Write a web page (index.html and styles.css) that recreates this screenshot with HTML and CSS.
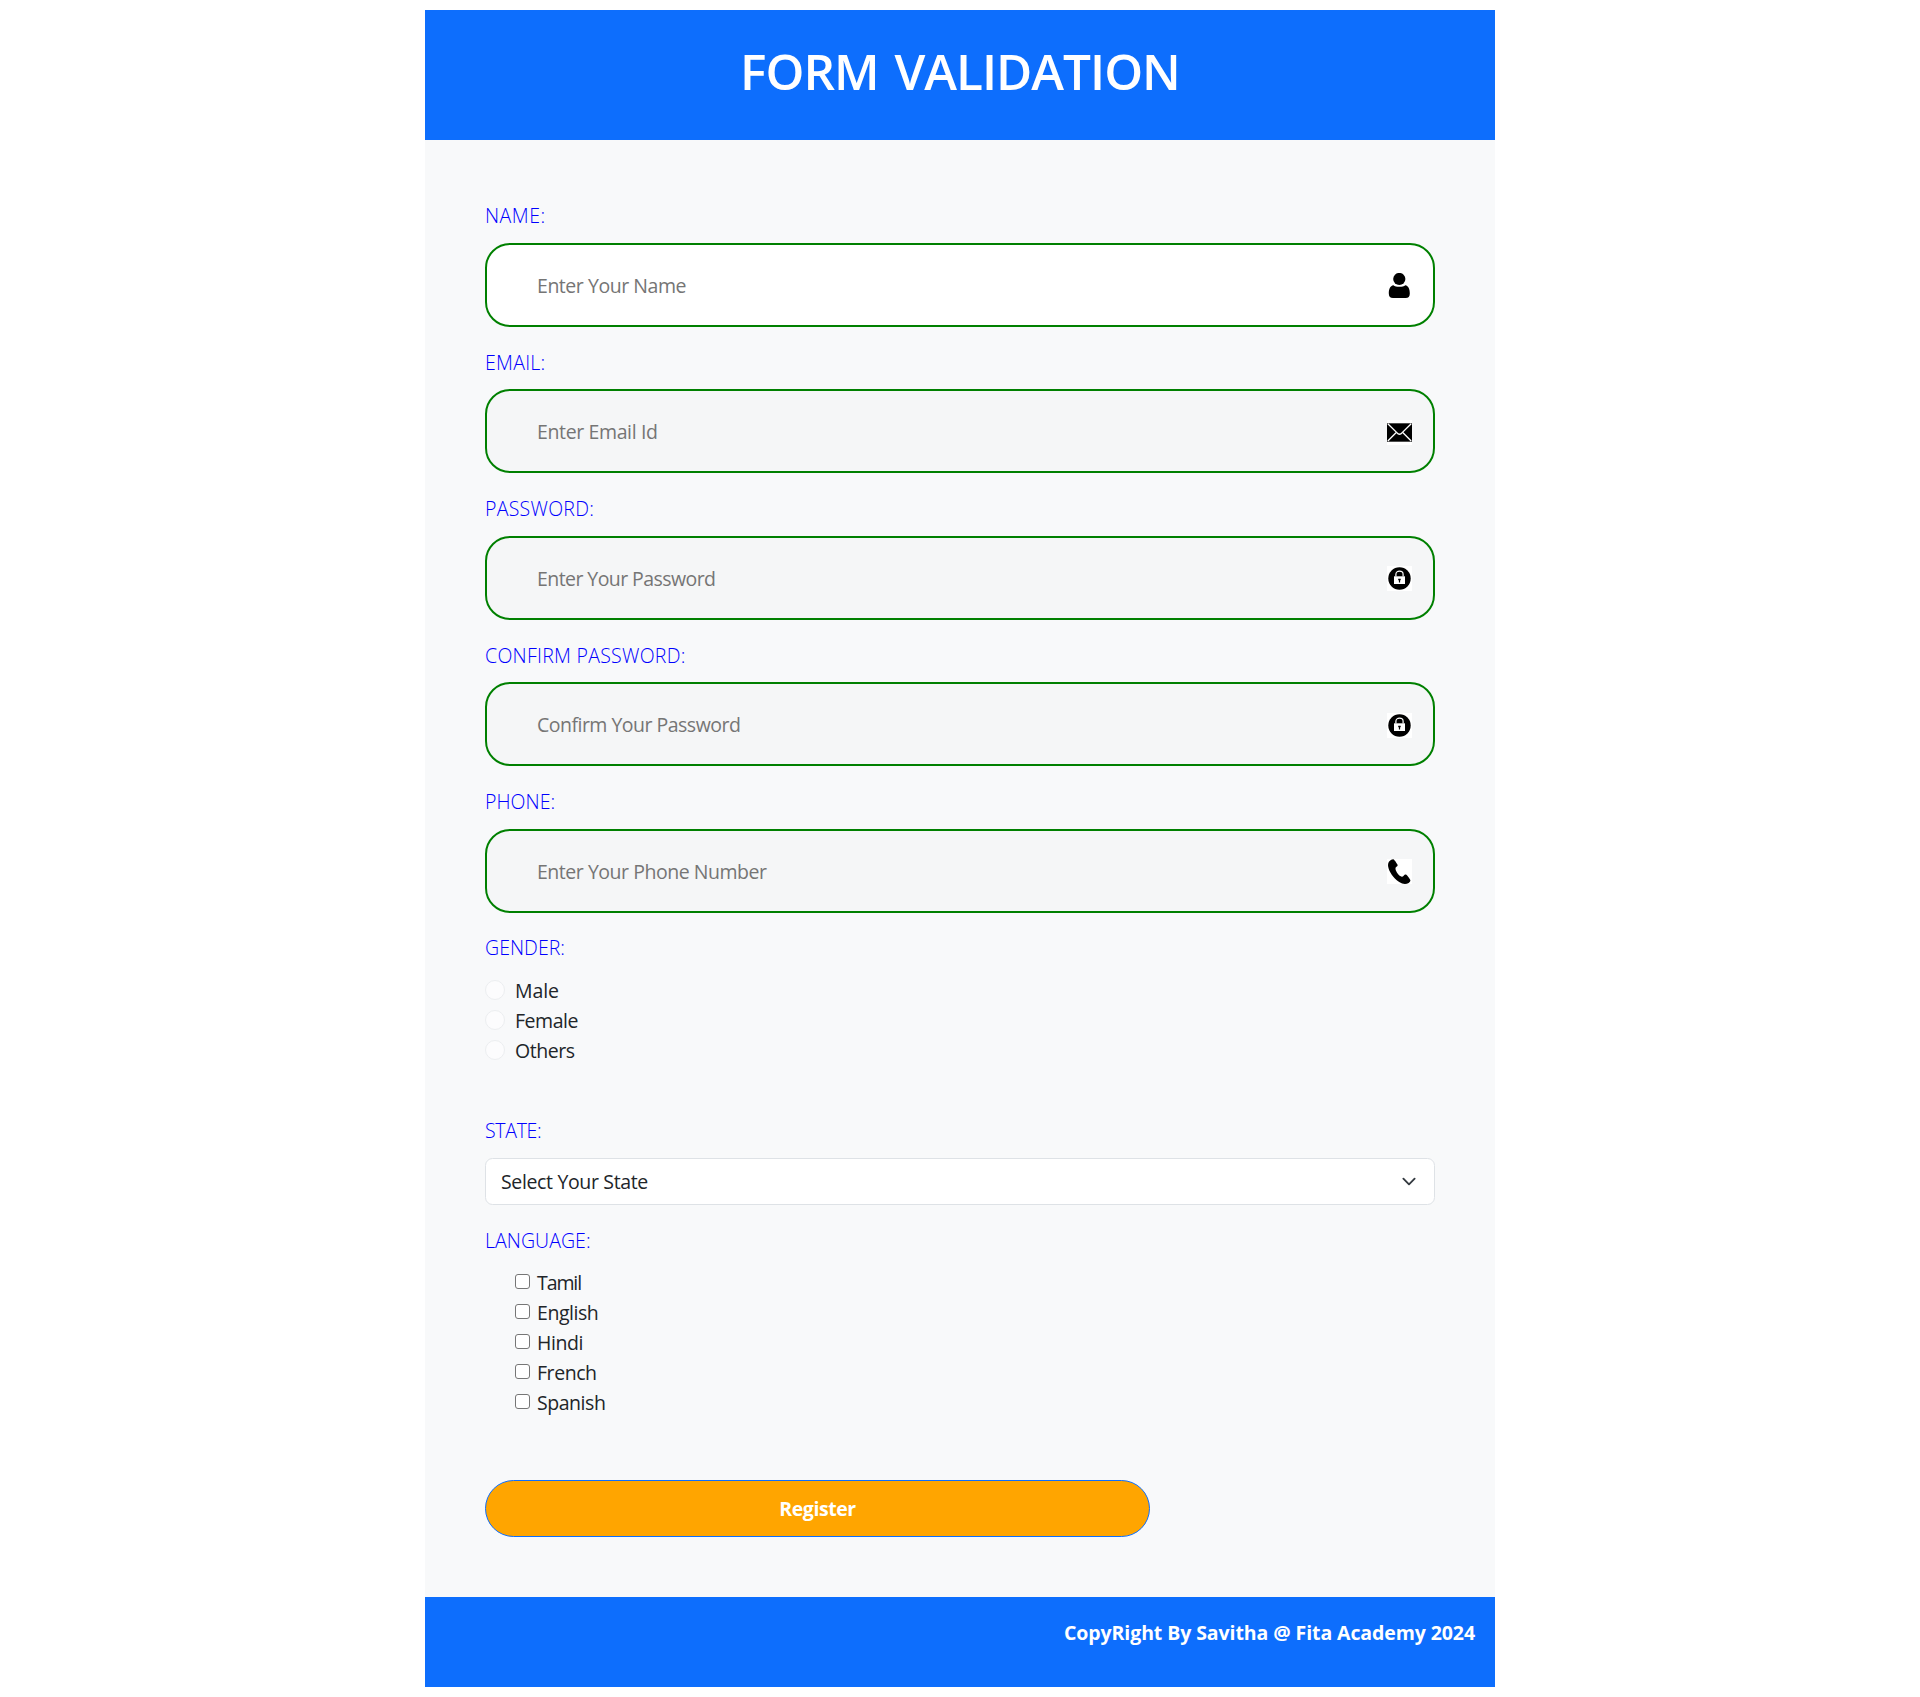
FILE: index.html
```html
<!DOCTYPE html>
<html lang="en">
<head>
<meta charset="utf-8">
<title>Form Validation</title>
<link rel="stylesheet" href="styles.css">
</head>
<body>
<div class="container">
  <header class="header"><h1 class="title">FORM VALIDATION</h1></header>
  <form class="form">
    <div class="field">
      <label class="label label-name" for="name">NAME:</label>
      <div class="control">
        <input class="input input-name" id="name" type="text" placeholder="Enter Your Name">
        <svg class="icon" viewBox="0 0 25 25"><circle cx="12.3" cy="6" r="6.1"/><path d="M6.500 12.200C3 12.600 1.800 16.500 1.800 20.500C1.800 23.700 3.300 25 6 25H18.700C21.400 25 22.800 23.700 22.800 20.500C22.800 16.500 21.600 12.600 18.200 12.200C16.500 14.300 8.300 14.300 6.500 12.200Z"/></svg>
      </div>
    </div>
    <div class="field">
      <label class="label" for="email">EMAIL:</label>
      <div class="control">
        <input class="input tinted input-email" id="email" type="email" placeholder="Enter Email Id">
        <svg class="icon boxed" viewBox="0 0 25 25"><path d="M0 3.300H25V21.700H0Z"/><path class="line" d="M0.800 3.800L9.800 12.600C11.500 14.800 13.500 14.800 15.200 12.600L24.200 3.800M0.800 21L9 12.700M24.200 21L16 12.700"/></svg>
      </div>
    </div>
    <div class="field">
      <label class="label" for="password">PASSWORD:</label>
      <div class="control">
        <input class="input tinted input-password" id="password" type="password" placeholder="Enter Your Password">
        <svg class="icon boxed" viewBox="0 0 25 25"><circle cx="12.500" cy="12.500" r="11.200"/><path class="shackle" d="M8.900 10.500V8.200C8.900 4.200 16.100 4.200 16.100 8.200V10.500"/><path class="lock" d="M7 10.300H18V18H7Z"/><path d="M11.200 12.800H13.700V14.200H13.100V16.500H11.900V14.200H11.200Z"/></svg>
      </div>
    </div>
    <div class="field">
      <label class="label" for="confirm">CONFIRM PASSWORD:</label>
      <div class="control">
        <input class="input tinted input-confirm" id="confirm" type="password" placeholder="Confirm Your Password">
        <svg class="icon boxed" viewBox="0 0 25 25"><circle cx="12.500" cy="12.500" r="11.200"/><path class="shackle" d="M8.900 10.500V8.200C8.900 4.200 16.100 4.200 16.100 8.200V10.500"/><path class="lock" d="M7 10.300H18V18H7Z"/><path d="M11.200 12.800H13.700V14.200H13.100V16.500H11.900V14.200H11.200Z"/></svg>
      </div>
    </div>
    <div class="field">
      <label class="label label-phone" for="phone">PHONE:</label>
      <div class="control">
        <input class="input tinted input-phone" id="phone" type="tel" placeholder="Enter Your Phone Number">
        <svg class="icon boxed" viewBox="0 0 25 25"><path d="M2.400 2.200C3.800 0.600 5.900-0.200 6.700 0.400C7.600 1 9.900 4.300 10.500 5.600C10.900 6.700 10.300 7.300 9.200 7.900C8.300 8.500 8.300 9.600 8.900 11.400C10 14.400 12 16.600 14.300 17.500C15.500 18 16.300 17.500 16.900 16.500C17.500 15.500 18.400 15.200 19.400 15.800C20.500 16.600 22.700 19.700 23.300 21C23.600 22 23 23 21.700 23.900C18.800 25.500 15.500 25.100 12.200 23C6.500 19.300 1.800 12.500 1.100 7.200C0.900 5 1.300 3.400 2.400 2.200Z"/></svg>
      </div>
    </div>
    <div class="field gender">
      <span class="label label-even">GENDER:</span>
      <label class="radio male"><input type="radio" name="gender" disabled>Male</label>
      <label class="radio"><input type="radio" name="gender" disabled>Female</label>
      <label class="radio"><input type="radio" name="gender" disabled>Others</label>
    </div>
    <div class="field state">
      <label class="label label-state" for="state">STATE:</label>
      <div class="control">
        <select class="select" id="state"><option>Select Your State</option></select>
        <svg class="chevron" viewBox="0 0 16 16"><path d="m2 5 6 6 6-6"/></svg>
      </div>
    </div>
    <div class="field">
      <span class="label label-even">LANGUAGE:</span>
      <label class="check tamil"><input type="checkbox">Tamil</label>
      <label class="check"><input type="checkbox">English</label>
      <label class="check"><input type="checkbox">Hindi</label>
      <label class="check"><input type="checkbox">French</label>
      <label class="check"><input type="checkbox">Spanish</label>
    </div>
    <button class="submit" type="button">Register</button>
  </form>
  <footer class="footer">CopyRight By Savitha @ Fita Academy 2024</footer>
</div>
</body>
</html>
```
FILE: styles.css
```css
* { box-sizing: border-box; }
body {
  margin: 0;
  background: #fff;
  color: #212529;
  font: 400 19.5px/30px "Open Sans", sans-serif;
  letter-spacing: -0.45px;
}
.container { width: 1070px; margin: 10px auto; }
.header { height: 130px; padding-top: 31px; background: #0d6efd; color: #fff; text-align: center; }
.title { margin: 0; font-size: 49.5px; font-weight: 600; line-height: 60px; letter-spacing: -1px; word-spacing: 4px; }
.form { height: 1457px; padding: 60px 60px 0; background: #f8f9fa; }
.field { display: flex; flex-direction: column; margin-bottom: 19.4px; }
.label { display: block; height: 30px; margin-bottom: 13px; padding-top: 1.4px; color: #00f; font-weight: 300; letter-spacing: 0.28px; }
.label-name { letter-spacing: 0.55px; }
.label-phone { letter-spacing: 0.07px; }
.label-even { letter-spacing: 0.05px; }
.label-state { letter-spacing: -0.3px; }
.control { position: relative; display: flex; }
.input {
  width: 100%;
  height: 84px;
  padding: 1px 50px 0;
  border: 2px solid green;
  border-radius: 25px;
  background: #fff;
  font: inherit;
  outline: none;
}
.input::placeholder { color: #757575; }
.tinted { background: #f5f6f7; }
.input-name { letter-spacing: -0.46px; }
.input-email { letter-spacing: -0.37px; }
.input-password { letter-spacing: -0.57px; }
.input-confirm { letter-spacing: -0.51px; }
.input-phone { letter-spacing: -0.47px; }
.icon { position: absolute; top: 30px; right: 23px; width: 25px; height: 25px; }
.boxed { top: 30.5px; background: #fff; }
.line { fill: none; stroke: #fff; stroke-width: 1.3; }
.shackle { fill: none; stroke: #fff; stroke-width: 1.2; }
.lock { fill: #fff; }
.gender { margin-bottom: 49px; }
.gender .label { margin-bottom: 14px; }
.radio { display: flex; align-items: flex-start; gap: 10px; height: 30px; }
.radio input {
  appearance: none;
  width: 20px;
  height: 20px;
  margin: 4px 0 0;
  border: 1px solid #eceef0;
  border-radius: 50%;
  background: #fcfcfd;
}
.male { letter-spacing: -0.1px; }
.state { margin-bottom: 20px; }
.select {
  width: 100%;
  height: 47px;
  padding: 1px 45px 0 15px;
  border: 1px solid #dee2e6;
  border-radius: 7.5px;
  appearance: none;
  background: #fff;
  color: #212529;
  font: inherit;
  letter-spacing: -0.35px;
}
.chevron { position: absolute; top: 16px; right: 16px; width: 20px; height: 15px; fill: none; stroke: #343a40; stroke-width: 2; stroke-linecap: round; stroke-linejoin: round; }
.check { display: flex; align-items: flex-start; gap: 7px; height: 30px; padding-left: 30px; }
.check input { appearance: none; width: 15px; height: 15px; margin: 6px 0 0; border: 1px solid #767676; border-radius: 3px; background: #fff; }
.tamil { letter-spacing: -1.1px; }
.submit {
  display: block;
  width: 665px;
  height: 57px;
  margin-top: 62px;
  padding: 1px 0 0;
  border: 1px solid #0d6efd;
  border-radius: 29px;
  background: orange;
  color: #fff;
  font: inherit;
  font-weight: 700;
  letter-spacing: -0.45px;
}
.footer { height: 90px; padding: 21px 20px; background: #0d6efd; color: #fff; font-weight: 700; letter-spacing: -0.09px; text-align: right; }
```
